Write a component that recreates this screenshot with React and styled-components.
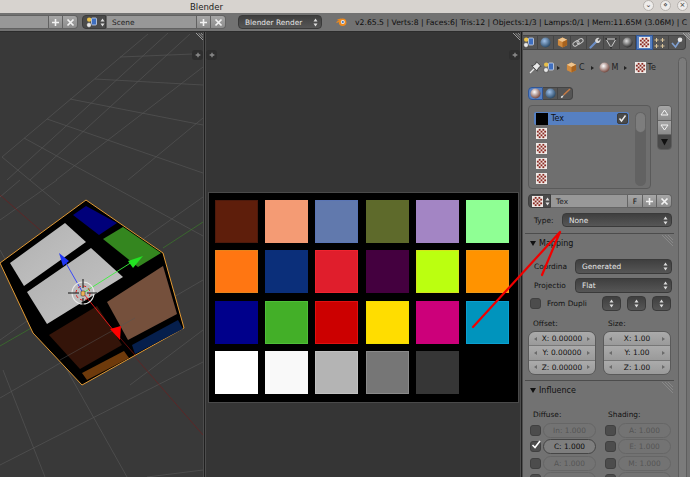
import React from 'react';
import styled, { createGlobalStyle } from 'styled-components';

const GlobalStyle = createGlobalStyle`
  html, body { margin: 0; padding: 0; background: #727272; }
  body { font-family: "DejaVu Sans", sans-serif; font-size: 7.4px; color: #111; }
`;

const Page = styled.div`
  position: relative;
  width: 690px;
  height: 477px;
  overflow: hidden;
  display: flex;
  flex-direction: column;
`;

// window chrome
const TitleBar = styled.div`
  position: relative;
  height: 13px;
  flex: none;
  background: #d7d3cf;
  display: flex;
  align-items: center;
  padding-left: 190px;
  font-size: 8.5px;
  color: #222;
`;

const WinButtons = styled.div`
  position: absolute;
  right: 2px;
  top: 0;
  height: 11px;
  display: flex;
  gap: 6px;
`;

const WinButton = styled.div`
  width: 11px;
  height: 11px;
  border-radius: 50%;
  background: #eeecea;
  border: 1px solid #b5b1ad;
  box-sizing: border-box;
  display: flex;
  align-items: center;
  justify-content: center;
  font-size: 7px;
  line-height: 1;
  color: #333;
`;

// top header
const Toolbar = styled.div`
  height: 19px;
  flex: none;
  box-sizing: border-box;
  background: #727272;
  border-bottom: 1px solid #2c2c2c;
  display: flex;
  align-items: center;
  white-space: nowrap;
  overflow: hidden;
`;

const HeaderField = styled.div`
  width: ${p => p.$w}px;
  height: 14px;
  flex: none;
  box-sizing: border-box;
  background: #989898;
  border: 1px solid #626262;
  border-left-width: ${p => (p.$flush ? 0 : 1)}px;
  display: flex;
  align-items: center;
  padding-left: 5px;
  color: #222;
`;

const SquareBtn = styled.div`
  width: ${p => p.$w || 14}px;
  height: 14px;
  flex: none;
  box-sizing: border-box;
  background: linear-gradient(#a6a6a6, #8c8c8c);
  border: 1px solid #626262;
  border-left-width: 0;
  border-radius: ${p => (p.$end ? '0 4px 4px 0' : '0')};
  display: flex;
  align-items: center;
  justify-content: center;
`;

const IconDrop = styled.div`
  margin-left: ${p => p.$ml}px;
  width: 24px;
  height: 14px;
  flex: none;
  box-sizing: border-box;
  background: #4b4b4b;
  border: 1px solid #3c3c3c;
  border-radius: 4px 0 0 4px;
  display: flex;
  align-items: center;
  padding-left: 3px;
  gap: 2px;
`;

const Dropdown = styled.div`
  width: ${p => p.$w || 'auto'};
  flex: ${p => (p.$grow ? 1 : 'none')};
  margin-left: ${p => p.$ml || 0}px;
  height: ${p => p.$h || 14}px;
  box-sizing: border-box;
  background: linear-gradient(#3f3f3f, #565656);
  border: 1px solid #3a3a3a;
  border-radius: 4px;
  color: #e6e6e6;
  display: flex;
  align-items: center;
  justify-content: space-between;
  padding: 0 3px 0 6px;
`;

const LogoSlot = styled.span`
  margin-left: 14px;
  display: flex;
  align-items: center;
`;

const InfoText = styled.span`
  margin-left: 8px;
  color: #0e0e0e;
  font-size: 7.7px;
`;

// main area
const Main = styled.div`
  flex: 1;
  min-height: 0;
  display: flex;
`;

const View = styled.div`
  position: relative;
  width: ${p => p.$w}px;
  flex: none;
  background: ${p => p.$bg};
  display: flex;
  flex-direction: column;
  align-items: center;
  overflow: hidden;
`;

const Divider = styled.div`
  width: 3px;
  flex: none;
  box-sizing: border-box;
  background: #1f1f1f;
  border-left: 1px solid #4d4d4d;
  border-right: 1px solid #4d4d4d;
`;

const Scene = styled.svg`
  display: block;
  width: 203px;
  height: 445px;
`;

const Corner = styled.svg`
  position: absolute;
  top: 1px;
  right: 0;
  width: 9px;
  height: 9px;
`;

const PlusTab = styled.div`
  position: absolute;
  top: 18px;
  ${p => (p.$left ? 'left: 0;' : 'right: 0;')}
  width: 11px;
  height: 10px;
  border-radius: 3px;
  background: #2e2e2e;
  display: flex;
  align-items: center;
  justify-content: center;
`;

// image shown in the middle view
const ImageFrame = styled.div`
  margin-top: 161px;
  width: 309px;
  height: 209px;
  flex: none;
  box-sizing: border-box;
  background: #000;
  padding: 7px 6px;
  display: grid;
  grid-template-columns: repeat(6, 43px);
  grid-auto-rows: 43px;
  column-gap: 7.4px;
  row-gap: 7.4px;
  outline: 1px solid #4a4a4a;
`;

const Swatch = styled.div`
  background: ${p => p.$c};
  box-shadow: inset 0 0 0 1px ${p => p.$edge || p.$c};
`;

// properties panel
const Panel = styled.div`
  position: relative;
  flex: 1;
  min-width: 0;
  background: #727272;
  overflow: hidden;
  display: flex;
  flex-direction: column;
`;

const TabStrip = styled.div`
  display: flex;
  justify-content: flex-end;
  padding: 3px 4.5px 0 0;
  height: 15px;
  flex: none;
  overflow: hidden;
`;

const TabCell = styled.div`
  width: 16.4px;
  height: 15px;
  flex: none;
  box-sizing: border-box;
  background: ${p => (p.$active ? '#5680c2' : '#555')};
  border: 1px solid ${p => (p.$active ? '#2f5595' : '#444')};
  border-left-width: ${p => (p.$active ? 1 : 0)}px;
  display: flex;
  align-items: center;
  justify-content: center;
  &:last-child { border-radius: 0 4px 4px 0; }
`;

const PanelBody = styled.div`
  flex: 1;
  min-height: 0;
  display: flex;
  padding-left: 5px;
`;

const PanelContent = styled.div`
  width: 144px;
  flex: none;
  display: flex;
  flex-direction: column;
`;

const ScrollTrack = styled.div`
  width: 9px;
  flex: none;
  margin: 7px 0 -30px 6px;
  box-sizing: border-box;
  border: 1px solid #5e5e5e;
  border-radius: 5px;
  background: #7b7b7b;
`;

const Breadcrumb = styled.div`
  margin-top: 11px;
  height: 14px;
  display: flex;
  align-items: center;
  padding-left: 1px;
  color: #222;
  font-size: 8px;
`;

const Crumb = styled.span`
  display: flex;
  align-items: center;
  gap: 2px;
  margin-right: ${p => p.$gap}px;
`;

const Arrow = styled.span`
  width: 0;
  height: 0;
  margin-left: ${p => p.$ml || 0}px;
  border-left: 3px solid #222;
  border-top: 2px solid transparent;
  border-bottom: 2px solid transparent;
`;

const SubTabs = styled.div`
  margin-top: 13px;
  display: flex;
  height: 14px;
`;

const SubTab = styled.div`
  width: 15px;
  box-sizing: border-box;
  background: ${p => (p.$active ? '#5680c2' : '#555')};
  border: 1px solid ${p => (p.$active ? '#2f5595' : '#444')};
  border-left-width: ${p => (p.$active ? 1 : 0)}px;
  border-radius: ${p => p.$r || 0};
  display: flex;
  align-items: center;
  justify-content: center;
`;

const ListRow = styled.div`
  margin-top: 5px;
  display: flex;
  gap: 6px;
`;

const ListBox = styled.div`
  position: relative;
  width: 123px;
  height: 84px;
  flex: none;
  box-sizing: border-box;
  border: 1px solid #5a5a5a;
  border-radius: 4px;
  background: #6f6f6f;
  padding: 6px 0 0 5px;
  display: flex;
  flex-direction: column;
  gap: 2px;
`;

const Slot = styled.div`
  width: 95px;
  height: 13px;
  box-sizing: border-box;
  display: flex;
  align-items: center;
  gap: 3px;
  padding-left: 2px;
  background: ${p => (p.$selected ? '#5680c2' : 'transparent')};
  border-radius: 2px;
  color: #111;
  font-size: 8px;
`;

const SlotCheck = styled.div`
  margin-left: auto;
  margin-right: 1px;
  width: 11px;
  height: 11px;
  box-sizing: border-box;
  background: #4a4a4a;
  border: 1px solid #3d3d3d;
  border-radius: 2px;
  display: flex;
  align-items: center;
  justify-content: center;
`;

const ListScroll = styled.div`
  position: absolute;
  top: 6px;
  right: 4px;
  width: 11px;
  height: 74px;
  box-sizing: border-box;
  border-radius: 6px;
  background: #626262;
`;

const ListThumb = styled.div`
  height: 21px;
  border: 1px solid #646464;
  box-sizing: border-box;
  border-radius: 6px;
  background: #7d7d7d;
`;

const SideButtons = styled.div`
  width: 15px;
  height: 45px;
  flex: none;
  display: flex;
  flex-direction: column;
  border-radius: 4px;
  overflow: hidden;
  border: 1px solid #5c5c5c;
  box-sizing: border-box;
`;

const SideButton = styled.div`
  flex: 1;
  background: ${p => (p.$dark ? '#4a4a4a' : 'linear-gradient(#a6a6a6, #8c8c8c)')};
  border-top: ${p => (p.$first ? 0 : 1)}px solid #666;
  display: flex;
  align-items: center;
  justify-content: center;
`;

const TexRow = styled.div`
  margin-top: 5px;
  height: 14px;
  display: flex;
`;

const TexIcon = styled.div`
  width: 23px;
  flex: none;
  box-sizing: border-box;
  background: #4b4b4b;
  border: 1px solid #3f3f3f;
  border-radius: 4px 0 0 4px;
  display: flex;
  align-items: center;
  gap: 2px;
  padding-left: 3px;
`;

const TexName = styled.div`
  flex: 1;
  box-sizing: border-box;
  background: #989898;
  border: 1px solid #656565;
  border-left-width: 0;
  padding-left: 5px;
  display: flex;
  align-items: center;
  color: #222;
`;

const FormRow = styled.div`
  margin-top: ${p => p.$mt}px;
  display: flex;
  align-items: center;
  height: ${p => p.$h || 15}px;
  padding-left: ${p => p.$pl || 0}px;
`;

const Label = styled.span`
  width: ${p => p.$w}px;
  flex: none;
  padding-left: ${p => p.$pl ?? 6}px;
  box-sizing: border-box;
  color: #111;
  white-space: nowrap;
`;

const Section = styled.div`
  position: relative;
  margin: ${p => p.$mt}px 0 0 -3px;
  width: 149px;
  border-top: 1px solid #4c4c4c;
  padding: 2px 0 0 5px;
  box-sizing: border-box;
  height: 18px;
  flex: none;
  display: flex;
  align-items: center;
  gap: 3px;
  font-size: 8px;
  color: #111;
`;

const Triangle = styled.span`
  width: 0;
  height: 0;
  border-top: 5px solid #111;
  border-left: 3px solid transparent;
  border-right: 3px solid transparent;
`;

const Hatch = styled.svg`
  position: absolute;
  top: 1px;
  right: 1px;
  width: 13px;
  height: 13px;
`;

const Checkbox = styled.div`
  width: 11px;
  height: 11px;
  flex: none;
  box-sizing: border-box;
  background: #4c4c4c;
  border: 1px solid #404040;
  border-radius: 3px;
  position: relative;
`;

const CheckMark = styled.svg`
  position: absolute;
  left: 0;
  top: -3px;
  width: 11px;
  height: 11px;
`;

const SmallDrop = styled(Dropdown)`
  width: 19px;
  flex: none;
  margin-left: ${p => p.$ml || 0}px;
  padding: 0;
  justify-content: center;
`;

const Columns = styled.div`
  margin-top: ${p => p.$mt}px;
  display: grid;
  grid-template-columns: 68px 68px;
  column-gap: 7px;
`;

const ColLabel = styled.div`
  height: 12px;
  padding-left: 5px;
  display: flex;
  align-items: center;
  color: #111;
`;

const NumGroup = styled.div`
  margin-top: 2px;
  border-radius: 7px;
  overflow: hidden;
  border: 1px solid #5a5a5a;
  box-sizing: border-box;
  height: 44px;
  display: flex;
  flex-direction: column;
`;

const NumField = styled.div`
  flex: 1;
  background: linear-gradient(#ababab, #9a9a9a);
  border-top: ${p => (p.$first ? 0 : 1)}px solid #777;
  display: flex;
  align-items: center;
  justify-content: space-between;
  padding: 0 5px;
  color: #111;
`;

const SideTri = styled.span`
  width: 0;
  height: 0;
  border-top: 2px solid transparent;
  border-bottom: 2px solid transparent;
  ${p => (p.$right ? 'border-left: 3px solid #6a6a6a;' : 'border-right: 3px solid #6a6a6a;')}
`;

const SliderCol = styled.div`
  padding-top: 1px;
`;

const SliderRow = styled.div`
  margin-top: 1.5px;
  display: flex;
  align-items: center;
  height: 15px;
  gap: 2px;
  padding-left: 2px;
`;

const Pill = styled.div`
  flex: 1;
  height: 15px;
  box-sizing: border-box;
  border-radius: 8px;
  border: 1px solid ${p => (p.$on ? '#454545' : '#666')};
  background: ${p => (p.$on ? '#7e7e7e' : '#737373')};
  display: flex;
  align-items: center;
  justify-content: center;
  color: ${p => (p.$on ? '#0c0c0c' : '#555')};
`;

const Overlay = styled.svg`
  position: absolute;
  left: 0;
  top: 0;
  width: 690px;
  height: 477px;
  pointer-events: none;
`;

const Updown = ({ color = '#ddd' }) => (
  <svg width="5" height="9" viewBox="0 0 5 9">
    <path d="M2.5 0.5L4.5 3.5H0.5ZM2.5 8.5L4.5 5.5H0.5Z" fill={color} />
  </svg>
);

const PlusIcon = ({ color = '#f2f2f2', weight = 1.6, size = 9 }) => (
  <svg width={size} height={size} viewBox="0 0 9 9">
    <path d="M4.5 1V8M1 4.5H8" stroke={color} strokeWidth={weight} />
  </svg>
);

const CrossIcon = () => (
  <svg width="9" height="9" viewBox="0 0 9 9">
    <path d="M1.5 1.5L7.5 7.5M7.5 1.5L1.5 7.5" stroke="#f2f2f2" strokeWidth="1.7" />
  </svg>
);

const ViewPlus = () => <PlusIcon color="#8c8c8c" weight={2} size={6} />;

const Checker = ({ size = 11 }) => {
  const cells = [];
  for (let r = 0; r < 5; r++) {
    for (let c = 0; c < 5; c++) {
      if ((r + c) % 2 === 1) cells.push(<rect key={r + '-' + c} x={c + 0.5} y={r + 0.5} width="1" height="1" fill="#8c2a22" />);
    }
  }
  return (
    <svg width={size} height={size} viewBox="0 0 6 6">
      <rect width="6" height="6" fill="#efe9e6" />
      {cells}
    </svg>
  );
};

const Ball = ({ size = 11, id, from = '#f4f4f4', to = '#3a3a3a' }) => (
  <svg width={size} height={size} viewBox="0 0 12 12">
    <defs>
      <radialGradient id={id} cx="40%" cy="35%" r="70%">
        <stop offset="0" stopColor={from} />
        <stop offset="1" stopColor={to} />
      </radialGradient>
    </defs>
    <circle cx="6" cy="6" r="5.5" fill={`url(#${id})`} />
  </svg>
);

const SceneIcon = () => (
  <svg width="12" height="11" viewBox="0 0 12 11">
    <circle cx="3.2" cy="2.6" r="2.2" fill="#e8c04a" />
    <rect x="5.5" y="1" width="5" height="7" rx="1" fill="#3f6fc0" stroke="#dfe6f5" strokeWidth="0.7" />
    <circle cx="3" cy="8" r="2.4" fill="#e9e9e9" stroke="#333" strokeWidth="0.5" />
  </svg>
);

const CubeIcon = ({ size = 11 }) => (
  <svg width={size} height={size} viewBox="0 0 12 12">
    <path d="M6 0.5L11 3V9L6 11.5L1 9V3Z" fill="#d08a3e" />
    <path d="M6 0.5L11 3L6 5.5L1 3Z" fill="#efc58f" />
    <path d="M6 5.5L11 3V9L6 11.5Z" fill="#a7631f" />
  </svg>
);

const LinkIcon = () => (
  <svg width="12" height="11" viewBox="0 0 12 11" fill="none" stroke="#c9c9c9" strokeWidth="1">
    <rect x="0.8" y="4.5" width="6.5" height="4" rx="2" transform="rotate(-35 4 6.5)" />
    <rect x="4.8" y="2.3" width="6.5" height="4" rx="2" transform="rotate(-35 8 4.3)" />
  </svg>
);

const WrenchIcon = () => (
  <svg width="12" height="12" viewBox="0 0 12 12">
    <path d="M1.5 10.5L7 5" stroke="#6d8fc7" strokeWidth="2.2" strokeLinecap="round" />
    <path d="M6.3 4.5A3 3 0 0 1 10.5 1L8.6 2.8L9.2 3.9L10.4 3.6L11.3 1.9A3 3 0 0 1 7.4 5.8Z" fill="#d6d6d6" />
  </svg>
);

const MeshIcon = () => (
  <svg width="12" height="12" viewBox="0 0 12 12" fill="none" stroke="#d8d8d8" strokeWidth="0.9">
    <path d="M1 2H11L6 10.5Z" />
    <circle cx="1.2" cy="2" r="0.9" fill="#222" stroke="none" />
    <circle cx="10.8" cy="2" r="0.9" fill="#222" stroke="none" />
    <circle cx="6" cy="10.5" r="0.9" fill="#222" stroke="none" />
  </svg>
);

const ParticlesIcon = () => (
  <svg width="12" height="12" viewBox="0 0 12 12" stroke="#d9c49a" strokeWidth="1">
    <path d="M2.5 1V5M0.5 3H4.5M8.5 1V5M6.5 3H10.5M2.5 7V11M0.5 9H4.5M8.5 7V11M6.5 9H10.5" />
  </svg>
);

const PhysicsIcon = () => (
  <svg width="12" height="12" viewBox="0 0 12 12">
    <path d="M1 6L4.5 10L8.5 4" fill="none" stroke="#7f9fd0" strokeWidth="1.6" />
    <circle cx="9" cy="2.8" r="2.3" fill="#e6e6e6" />
  </svg>
);

const PinIcon = () => (
  <svg width="13" height="13" viewBox="0 0 13 13">
    <path d="M1 12L5 8" stroke="#e8e8e8" strokeWidth="1.2" />
    <path d="M7.5 0.8L12 5.3L10.5 5.8L8.4 8.6L8.3 10.2L2.8 4.7L4.4 4.6L7 2.5Z" fill="#e8e8e8" stroke="#222" strokeWidth="0.7" />
  </svg>
);

const BrushIcon = () => (
  <svg width="11" height="11" viewBox="0 0 11 11">
    <path d="M10 1L3.6 7" stroke="#c57a44" strokeWidth="1.6" />
    <path d="M4 7L2.2 10L0.8 9.8L1.2 8.2Z" fill="#ddd" />
  </svg>
);

const Logo = () => (
  <svg width="11" height="10" viewBox="0 0 11 10">
    <circle cx="6.6" cy="5.2" r="3.8" fill="#ed8a1f" />
    <circle cx="6.8" cy="5" r="2" fill="#e8eef6" />
    <circle cx="6.8" cy="5" r="1.1" fill="#3d6fb4" />
    <path d="M0.5 5.5L4 3.5M1.5 3L5 2" stroke="#ed8a1f" strokeWidth="1.2" />
  </svg>
);

const HatchLines = ({ n = 4 }) => {
  const lines = [];
  for (let i = 0; i < n; i++) lines.push(<path key={i} d={`M${2 + i * 2.4} 0L9 ${7 - i * 2.4}`} />);
  return <g stroke="#b8b8b8" strokeWidth="0.8">{lines}</g>;
};

const SectionHatch = () => (
  <Hatch viewBox="0 0 13 13">
    <g stroke="#8e8e8e" strokeWidth="0.8">
      <path d="M2 0L13 11M5 0L13 8M8 0L13 5" />
    </g>
  </Hatch>
);

const gridLines = [
  [2, 157, 148, 34], [7, 180, 168, 33], [30, 180, 190, 34], [56, 180, 203, 67], [128, 180, 203, 118],
  [120, 57, 193, 54], [95, 79, 203, 85], [70, 99, 203, 125], [47, 119, 203, 173], [24, 138, 203, 236],
  [2, 157, 60, 205], [57, 180, 0, 220], [20, 180, 0, 197], [203, 197, 0, 340], [203, 280, 0, 398],
  [0, 465, 203, 362], [203, 470, 147, 477], [3, 370, 45, 477], [67, 370, 127, 477], [0, 250, 67, 370],
  [203, 330, 130, 385],
];

const swatches = [
  ['#5e1e0b', '#4d1a0c'], ['#f49b74'], ['#6179ad', '#5a75b5'], ['#5e6a2b'], ['#a385c4'], ['#8fff94'],
  ['#ff7612', '#e8841c'], ['#0b2f7a'], ['#e01e2c', '#f0242f'], ['#44003f'], ['#bbff10', '#d5e41c'], ['#ff9300', '#f09a18'],
  ['#00008b'], ['#43af28', '#4fbf38'], ['#cc0000', '#e01010'], ['#ffdd00', '#f2e000'], ['#cc007a'], ['#0094bd', '#0aa0d2'],
  ['#ffffff'], ['#f9f9f9'], ['#b4b4b4', '#c0c0c0'], ['#767676', '#8a8a8a'], ['#363636'], ['#000000'],
];

const CubeScene = () => (
  <Scene viewBox="0 32 203 445">
    <defs>
      <linearGradient id="lightFace" x1="0" y1="0" x2="1" y2="1">
        <stop offset="0" stopColor="#aeaeae" />
        <stop offset="1" stopColor="#c6c6c6" />
      </linearGradient>
    </defs>
    <g stroke="#545454" strokeWidth="0.7" fill="none">
      {gridLines.map((l, i) => <line key={i} x1={l[0]} y1={l[1]} x2={l[2]} y2={l[3]} />)}
    </g>
    <path d="M0 195L86 270M115 334L203 435" stroke="#6b2020" strokeWidth="0.7" fill="none" />
    <path d="M0 346L33 327M163 248L203 222" stroke="#3b7a2a" strokeWidth="0.7" fill="none" />
    <path d="M86 200L163 253L184 328L82 385L33 333L0 263Z" fill="#000" stroke="#e39a33" strokeWidth="1" />
    <path d="M10 263L65 223L86 242L24 286Z" fill="url(#lightFace)" />
    <path d="M27 292L91 248L123 277L47 324Z" fill="url(#lightFace)" />
    <path d="M73 215L86 206L117 223L99 235Z" fill="#00007a" />
    <path d="M103 239L123 227L161 253L138 267Z" fill="#34861f" />
    <path d="M107 302L163 266L177 314L128 340Z" fill="#75503c" />
    <path d="M49 335L97 306L122 345L80 369Z" fill="#341409" />
    <path d="M82 373L124 351L129 358L87 380Z" fill="#6e3a0b" />
    <path d="M132 345L178 320L183 329L135 354Z" fill="#061f4c" />
    <path d="M60 360L135 318" stroke="#555" strokeWidth="0.5" />
    <line x1="83" y1="293" x2="63" y2="258" stroke="#2a3cff" strokeWidth="0.9" />
    <path d="M59 253L69 261L63 266Z" fill="#1f35f5" />
    <line x1="83" y1="293" x2="132" y2="262" stroke="#3df03d" strokeWidth="0.9" />
    <path d="M143 256L128 261L133 268Z" fill="#22e322" />
    <line x1="83" y1="293" x2="114" y2="331" stroke="#f01818" strokeWidth="0.9" />
    <line x1="114" y1="331" x2="135" y2="355" stroke="#8a1010" strokeWidth="0.7" />
    <path d="M110 329L121 326L120 340Z" fill="#f00" />
    <circle cx="83" cy="293" r="11" fill="none" stroke="#e8e8e8" strokeWidth="1.1" />
    <circle cx="83" cy="293" r="7" fill="none" stroke="#e02020" strokeWidth="1" strokeDasharray="3 2.5" />
    <path d="M68 293H79M87 293H97M83 279V288M83 298V306" stroke="#111" strokeWidth="1" />
    <rect x="81" y="291" width="4" height="5" rx="1" fill="#efb25a" stroke="#222" strokeWidth="0.5" />
  </Scene>
);

const breadcrumbBalls = { from: '#ffffff', to: '#6b3a30' };

export default function App() {
  const tabs = [
    <SceneIcon key="s" />,
    <Ball key="w" id="tabWorld" from="#9fc0e8" to="#23425f" />,
    <CubeIcon key="o" />,
    <LinkIcon key="l" />,
    <WrenchIcon key="m" />,
    <MeshIcon key="d" />,
    <Ball key="mat" id="tabMat" from="#dddddd" to="#222222" />,
    <Checker key="t" size={11} />,
    <ParticlesIcon key="p" />,
    <PhysicsIcon key="ph" />,
  ];

  return (
    <Page>
      <GlobalStyle />
      <TitleBar>
        Blender
        <WinButtons>
          <WinButton>⌄</WinButton>
          <WinButton>⋄</WinButton>
          <WinButton>×</WinButton>
        </WinButtons>
      </TitleBar>

      <Toolbar>
        <HeaderField $w={49} $flush />
        <SquareBtn><PlusIcon /></SquareBtn>
        <SquareBtn $end $w={15}><CrossIcon /></SquareBtn>
        <IconDrop $ml={4}><SceneIcon /><Updown /></IconDrop>
        <HeaderField $w={91}>Scene</HeaderField>
        <SquareBtn><PlusIcon /></SquareBtn>
        <SquareBtn $end $w={15}><CrossIcon /></SquareBtn>
        <Dropdown $w="84px" $ml={12}>Blender Render<Updown /></Dropdown>
        <LogoSlot><Logo /></LogoSlot>
        <InfoText>v2.65.5 | Verts:8 | Faces:6| Tris:12 | Objects:1/3 | Lamps:0/1 | Mem:11.65M (3.06M) | C</InfoText>
      </Toolbar>

      <Main>
        <View $w={203} $bg="#393939">
          <CubeScene />
          <Corner viewBox="0 0 9 9"><HatchLines /></Corner>
          <PlusTab><ViewPlus /></PlusTab>
        </View>
        <Divider />
        <View $w={314} $bg="#353535">
          <Corner viewBox="0 0 9 9"><HatchLines /></Corner>
          <PlusTab $left><ViewPlus /></PlusTab>
          <PlusTab><ViewPlus /></PlusTab>
          <ImageFrame>
            {swatches.map((s, i) => <Swatch key={i} $c={s[0]} $edge={s[1]} />)}
          </ImageFrame>
        </View>
        <Divider />
        <Panel>
          <Corner viewBox="0 0 9 9"><HatchLines /></Corner>
          <TabStrip>
            {tabs.map((icon, i) => <TabCell key={i} $active={i === 7}>{icon}</TabCell>)}
          </TabStrip>
          <PanelBody>
            <PanelContent>
              <Breadcrumb>
                <Crumb $gap={1}><PinIcon /></Crumb>
                <Crumb $gap={6}><SceneIcon /><Arrow /></Crumb>
                <Crumb $gap={5}><CubeIcon /> C<Arrow $ml={4} /></Crumb>
                <Crumb $gap={8}><Ball id="crumbMat" {...breadcrumbBalls} /> M<Arrow $ml={3} /></Crumb>
                <Crumb $gap={0}><Checker /> Te</Crumb>
              </Breadcrumb>

              <SubTabs>
                <SubTab $active $r="4px 0 0 4px"><Ball id="subMat" {...breadcrumbBalls} /></SubTab>
                <SubTab><Ball id="subWorld" from="#9fc0e8" to="#23425f" /></SubTab>
                <SubTab $r="0 4px 4px 0"><BrushIcon /></SubTab>
              </SubTabs>

              <ListRow>
                <ListBox>
                  <Slot $selected>
                    <svg width="12" height="12"><rect width="12" height="12" fill="#000" /></svg>
                    Tex
                    <SlotCheck>
                      <svg width="9" height="9" viewBox="0 0 9 9"><path d="M1.5 4.5L3.5 7L7.5 1.5" fill="none" stroke="#eee" strokeWidth="1.4" /></svg>
                    </SlotCheck>
                  </Slot>
                  <Slot><Checker /></Slot>
                  <Slot><Checker /></Slot>
                  <Slot><Checker /></Slot>
                  <Slot><Checker /></Slot>
                  <ListScroll><ListThumb /></ListScroll>
                </ListBox>
                <SideButtons>
                  <SideButton $first>
                    <svg width="9" height="7" viewBox="0 0 9 7"><path d="M4.5 1L8 6H1Z" fill="none" stroke="#f2f2f2" strokeWidth="1" /></svg>
                  </SideButton>
                  <SideButton>
                    <svg width="9" height="7" viewBox="0 0 9 7"><path d="M4.5 6L8 1H1Z" fill="none" stroke="#f2f2f2" strokeWidth="1" /></svg>
                  </SideButton>
                  <SideButton $dark>
                    <svg width="9" height="8" viewBox="0 0 9 8"><path d="M1 1H8L4.5 7.5Z" fill="#111" /></svg>
                  </SideButton>
                </SideButtons>
              </ListRow>

              <TexRow>
                <TexIcon><Checker /><Updown /></TexIcon>
                <TexName>Tex</TexName>
                <SquareBtn $w={15}>F</SquareBtn>
                <SquareBtn><PlusIcon /></SquareBtn>
                <SquareBtn $end $w={15}><CrossIcon /></SquareBtn>
              </TexRow>

              <FormRow $mt={5}>
                <Label $w={34}>Type:</Label>
                <Dropdown $grow>None<Updown /></Dropdown>
              </FormRow>

              <Section $mt={6}><Triangle />Mapping<SectionHatch /></Section>

              <FormRow $mt={8}>
                <Label $w={47}>Coordina</Label>
                <Dropdown $grow $h={15}>Generated<Updown /></Dropdown>
              </FormRow>
              <FormRow $mt={4}>
                <Label $w={47}>Projectio</Label>
                <Dropdown $grow $h={15}>Flat<Updown /></Dropdown>
              </FormRow>
              <FormRow $mt={3} $pl={2}>
                <Checkbox />
                <Label $w={61} $pl={6}>From Dupli</Label>
                <SmallDrop $h={15}><Updown /></SmallDrop>
                <SmallDrop $ml={6} $h={15}><Updown /></SmallDrop>
                <SmallDrop $ml={6} $h={15}><Updown /></SmallDrop>
              </FormRow>

              <Columns $mt={6}>
                <ColLabel>Offset:</ColLabel>
                <ColLabel>Size:</ColLabel>
                <NumGroup>
                  <NumField $first><SideTri />X: 0.00000<SideTri $right /></NumField>
                  <NumField><SideTri />Y: 0.00000<SideTri $right /></NumField>
                  <NumField><SideTri />Z: 0.00000<SideTri $right /></NumField>
                </NumGroup>
                <NumGroup>
                  <NumField $first><SideTri />X: 1.00<SideTri $right /></NumField>
                  <NumField><SideTri />Y: 1.00<SideTri $right /></NumField>
                  <NumField><SideTri />Z: 1.00<SideTri $right /></NumField>
                </NumGroup>
              </Columns>

              <Section $mt={5}><Triangle />Influence<SectionHatch /></Section>

              <Columns $mt={10}>
                <ColLabel>Diffuse:</ColLabel>
                <ColLabel>Shading:</ColLabel>
                <SliderCol>
                  <SliderRow><Checkbox /><Pill>In: 1.000</Pill></SliderRow>
                  <SliderRow>
                    <Checkbox>
                      <CheckMark viewBox="0 0 11 11"><path d="M1.5 6L4 8.5L9 2" fill="none" stroke="#fff" strokeWidth="1.6" /></CheckMark>
                    </Checkbox>
                    <Pill $on>C: 1.000</Pill>
                  </SliderRow>
                  <SliderRow><Checkbox /><Pill>A: 1.000</Pill></SliderRow>
                  <SliderRow><Checkbox /><Pill /></SliderRow>
                </SliderCol>
                <SliderCol>
                  <SliderRow><Checkbox /><Pill>A: 1.000</Pill></SliderRow>
                  <SliderRow><Checkbox /><Pill>E: 1.000</Pill></SliderRow>
                  <SliderRow><Checkbox /><Pill>M: 1.000</Pill></SliderRow>
                  <SliderRow><Checkbox /><Pill /></SliderRow>
                </SliderCol>
              </Columns>
            </PanelContent>
            <ScrollTrack />
          </PanelBody>
        </Panel>
      </Main>

      <Overlay viewBox="0 0 690 477">
        <path d="M473 327L560 232L542 275" fill="none" stroke="#f00000" strokeWidth="2.2" strokeLinejoin="round" strokeLinecap="round" />
      </Overlay>
    </Page>
  );
}
